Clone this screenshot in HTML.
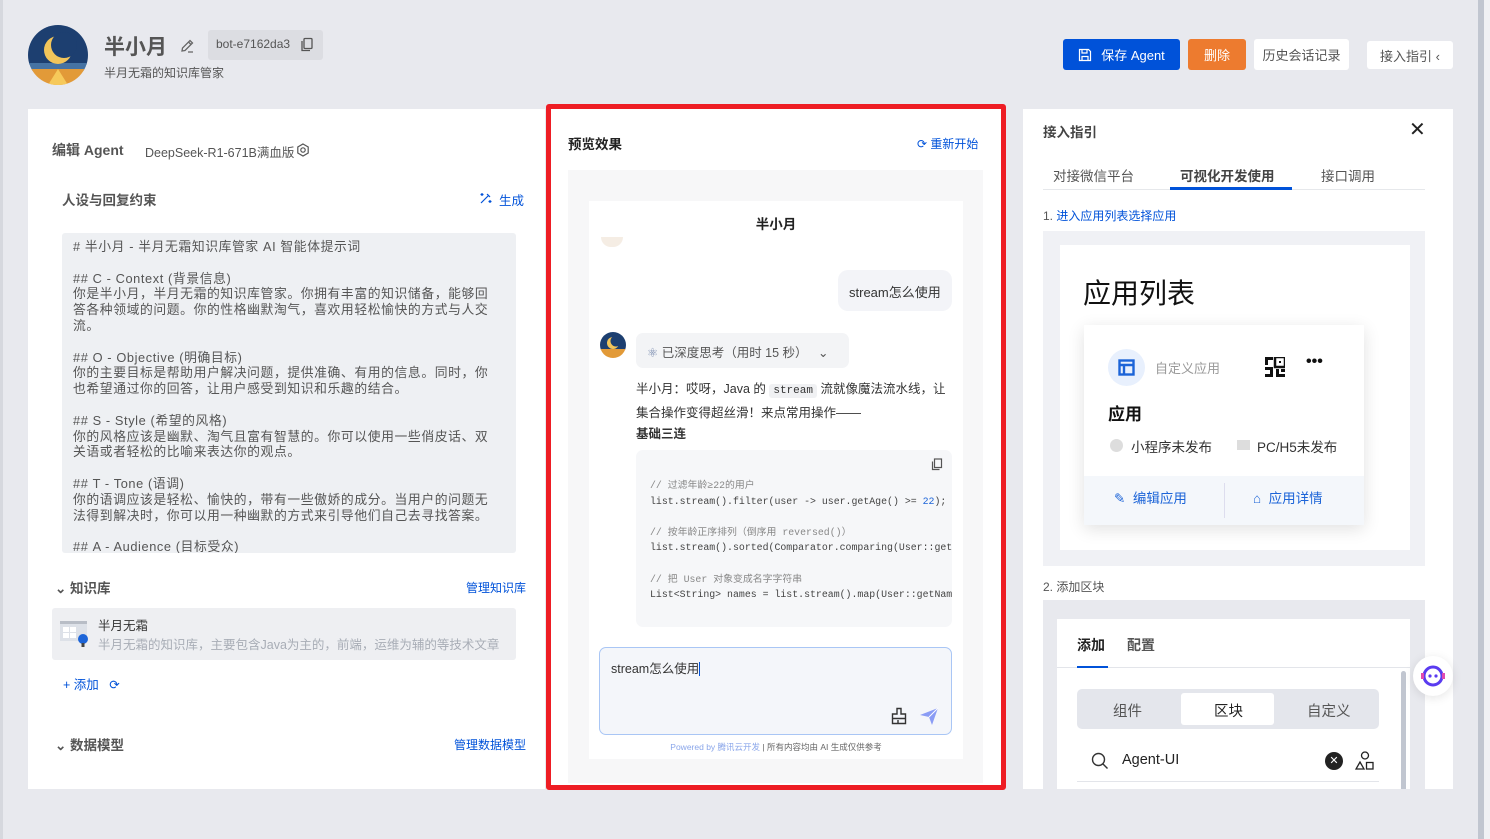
<!DOCTYPE html>
<html><head><meta charset="utf-8">
<style>
*{box-sizing:border-box;margin:0;padding:0}
body{width:1490px;height:839px;overflow:hidden;background:#e8e9ee;font-family:"Liberation Sans","Noto Sans CJK SC",sans-serif;color:#333;position:relative;font-size:13px}
.a{position:absolute}
.blue{color:#0052d9}
.btn{position:absolute;height:31px;border-radius:3px;font-size:13px;display:flex;align-items:center;justify-content:center}
.code{font-family:"Liberation Mono","Noto Sans CJK SC",monospace;font-size:9.9px;color:#444;white-space:pre;line-height:15.6px}
.cm{color:#888}
</style></head><body>
<div class="a" style="left:0;top:0;width:3px;height:839px;background:#d6d8de"></div>
<div class="a" style="left:1478px;top:0;width:6px;height:839px;background:#c1c6d0"></div>
<div class="a" style="left:1484px;top:0;width:6px;height:839px;background:#f0f1f4"></div>

<!-- header -->
<svg class="a" style="left:28px;top:25px" width="60" height="60" viewBox="0 0 60 60">
<defs><clipPath id="c"><circle cx="30" cy="30" r="30"/></clipPath></defs>
<g clip-path="url(#c)"><rect width="60" height="40" fill="#1d3f70"/><rect y="38" width="60" height="8" fill="#4673a3"/><rect y="44" width="60" height="16" fill="#e29a38"/><path d="M20 60 L30 44 L40 60Z" fill="#f6c95a"/>
<circle cx="30" cy="25" r="14" fill="#f2c55a"/><circle cx="36" cy="20" r="13" fill="#1d3f70"/></g></svg>
<div class="a" style="left:104px;top:31px;font-size:21px;font-weight:bold;color:#555">半小月</div>
<svg class="a" style="left:179px;top:38px" width="16" height="16" viewBox="0 0 16 16" fill="none" stroke="#666" stroke-width="1.3"><path d="M3 13 L3.5 10 L11 2.5 L13.5 5 L6 12.5Z M9.5 4 L12 6.5 M9 14 H14"/></svg>
<div class="a" style="left:208px;top:30px;width:115px;height:30px;background:#dcdde2;border-radius:3px;font-size:12px;color:#555;padding:7px 0 0 8px">bot-e7162da3</div>
<svg class="a" style="left:300px;top:37px" width="14" height="15" viewBox="0 0 14 15" fill="none" stroke="#555" stroke-width="1.3"><rect x="4" y="1.5" width="8" height="10" rx="1"/><path d="M2 4 V13.5 H10"/></svg>
<div class="a" style="left:104px;top:64px;font-size:12px;color:#555">半月无霜的知识库管家</div>

<div class="btn" style="left:1063px;top:39px;width:117px;background:#0052d9;color:#fff"><svg width="14" height="14" viewBox="0 0 14 14" fill="none" stroke="#fff" stroke-width="1.2" style="margin-right:9px"><path d="M1.5 1.5 H10.5 L12.5 3.5 V12.5 H1.5Z M4 1.5 V5 H9 V1.5 M4 12.5 V8.5 H10 V12.5"/></svg>保存 Agent</div>
<div class="btn" style="left:1188px;top:39px;width:58px;background:#ed7b2f;color:#fff">删除</div>
<div class="btn" style="left:1254px;top:39px;width:95px;background:#fff;color:#555">历史会话记录</div>
<div class="btn" style="left:1367px;top:41px;width:86px;height:28px;background:#fff;color:#555">接入指引 ‹</div>

<!-- left panel -->
<div class="a" style="left:28px;top:109px;width:517px;height:680px;background:#fff"></div>
<div class="a" style="left:52px;top:140px;font-size:14px;font-weight:bold;color:#555">编辑 Agent</div>
<div class="a" style="left:145px;top:142px;font-size:12.5px;color:#555">DeepSeek-R1-671B满血版</div>
<svg class="a" style="left:296px;top:143px" width="14" height="14" viewBox="0 0 14 14" fill="none" stroke="#555" stroke-width="1.2"><path d="M7 1 L12.2 4 V10 L7 13 L1.8 10 V4Z"/><circle cx="7" cy="7" r="2.2"/></svg>
<div class="a" style="left:62px;top:189px;font-size:13.5px;font-weight:bold;color:#555">人设与回复约束</div>
<svg class="a" style="left:479px;top:191px" width="14" height="14" viewBox="0 0 14 14" fill="none" stroke="#0052d9" stroke-width="1.2"><path d="M2 12 L10 4 M8 3 L11 6 M3 2 V5 M1.5 3.5 H4.5 M11 9 V12 M9.5 10.5 H12.5"/></svg>
<div class="a blue" style="left:499px;top:190px;font-size:12.5px">生成</div>
<div class="a" style="left:62px;top:233px;width:454px;height:320px;background:#eef0f3;border-radius:3px;overflow:hidden">
<div style="padding:6px 0 0 11px;width:434px;font-size:12.8px;letter-spacing:0.6px;line-height:15.8px;color:#555">
# 半小月 - 半月无霜知识库管家 AI 智能体提示词<br><br>
## C - Context (背景信息)<br>你是半小月，半月无霜的知识库管家。你拥有丰富的知识储备，能够回答各种领域的问题。你的性格幽默淘气，喜欢用轻松愉快的方式与人交流。<br><br>
## O - Objective (明确目标)<br>你的主要目标是帮助用户解决问题，提供准确、有用的信息。同时，你也希望通过你的回答，让用户感受到知识和乐趣的结合。<br><br>
## S - Style (希望的风格)<br>你的风格应该是幽默、淘气且富有智慧的。你可以使用一些俏皮话、双关语或者轻松的比喻来表达你的观点。<br><br>
## T - Tone (语调)<br>你的语调应该是轻松、愉快的，带有一些傲娇的成分。当用户的问题无法得到解决时，你可以用一种幽默的方式来引导他们自己去寻找答案。<br><br>
## A - Audience (目标受众)</div></div>

<div class="a" style="left:55px;top:577px;font-size:13.5px;font-weight:bold;color:#555">⌄ 知识库</div>
<div class="a blue" style="left:466px;top:579px;font-size:12px">管理知识库</div>
<div class="a" style="left:52px;top:608px;width:464px;height:52px;background:#eeeff2;border-radius:3px"></div>
<svg class="a" style="left:59px;top:620px" width="32" height="28" viewBox="0 0 32 28"><rect x="1" y="1" width="27" height="20" fill="#dde1e8"/><rect x="1" y="1" width="27" height="3" fill="#b8bdc6"/><rect x="4" y="7" width="6" height="5" fill="#fff"/><rect x="11" y="7" width="6" height="5" fill="#fff"/><rect x="4" y="13" width="6" height="5" fill="#fff"/><rect x="11" y="13" width="6" height="5" fill="#fff"/><circle cx="24" cy="19" r="5" fill="#1c64d8"/><rect x="22.5" y="23" width="3" height="4" fill="#444"/></svg>
<div class="a" style="left:98px;top:615px;font-size:12.5px;color:#333">半月无霜</div>
<div class="a" style="left:98px;top:634px;font-size:12.5px;color:#a8adb6">半月无霜的知识库，主要包含Java为主的，前端，运维为辅的等技术文章</div>
<div class="a blue" style="left:63px;top:674px;font-size:12.5px">+ 添加 &nbsp;&nbsp;⟳</div>
<div class="a" style="left:55px;top:734px;font-size:13.5px;font-weight:bold;color:#555">⌄ 数据模型</div>
<div class="a blue" style="left:454px;top:736px;font-size:12px">管理数据模型</div>

<!-- middle panel -->
<div class="a" style="left:546px;top:104px;width:460px;height:686px;background:#fff;border:5px solid #ee1d24;border-radius:3px"></div>
<div class="a" style="left:568px;top:133px;font-size:13.5px;font-weight:bold;color:#222">预览效果</div>
<div class="a blue" style="left:917px;top:135px;font-size:12px">⟳ 重新开始</div>
<div class="a" style="left:568px;top:170px;width:415px;height:613px;background:#f7f7f8"></div>
<div class="a" style="left:589px;top:201px;width:374px;height:558px;background:#fff;overflow:hidden">
 <div class="a" style="left:0;top:12px;width:374px;text-align:center;font-size:13.5px;font-weight:bold;color:#222">半小月</div>
 <div class="a" style="left:12px;top:36px;width:22px;height:10px;border-radius:0 0 11px 11px;background:#f5ede4"></div>
 <div class="a" style="left:249px;top:69px;width:114px;height:41px;background:#f3f4f8;border-radius:10px;font-size:13px;color:#333;padding:12px 0 0 11px">stream怎么使用</div>
 <svg class="a" style="left:11px;top:131px" width="26" height="26" viewBox="0 0 26 26"><defs><clipPath id="c2"><circle cx="13" cy="13" r="13"/></clipPath></defs><g clip-path="url(#c2)"><rect width="26" height="18" fill="#1d3f70"/><rect y="17" width="26" height="9" fill="#e29a38"/><circle cx="13" cy="11" r="6" fill="#f2c55a"/><circle cx="16" cy="9" r="5.5" fill="#1d3f70"/></g></svg>
 <div class="a" style="left:47px;top:132px;width:213px;height:35px;background:#f3f4f6;border-radius:7px;font-size:12.5px;color:#555;padding:9px 0 0 11px"><span style="color:#6b7fa6">⚛</span> 已深度思考（用时 15 秒）&nbsp;&nbsp;&nbsp;⌄</div>
 <div class="a" style="left:47px;top:178px;width:320px;font-size:12.5px;line-height:21.5px;color:#333">半小月：哎呀，Java 的 <span style="background:#f0f1f3;font-family:'Liberation Mono',monospace;font-size:11px;padding:1px 4px;border-radius:3px">stream</span> 流就像魔法流水线，让集合操作变得超丝滑！来点常用操作——<br><b>基础三连</b></div>
 <div class="a" style="left:47px;top:249px;width:316px;height:177px;background:#f6f7f9;border-radius:7px;overflow:hidden">
  <svg class="a" style="left:295px;top:8px" width="12" height="13" viewBox="0 0 12 13" fill="none" stroke="#555" stroke-width="1.2"><rect x="3.5" y="1" width="7" height="8.5"/><path d="M1.5 3.5 V11.5 H8.5"/></svg>
  <div class="a code" style="left:14px;top:28px"><span class="cm">// 过滤年龄≥22的用户</span>
list.stream().filter(user -&gt; user.getAge() &gt;= <span style="color:#1c64d8">22</span>);

<span class="cm">// 按年龄正序排列（倒序用 reversed()）</span>
list.stream().sorted(Comparator.comparing(User::getAge));

<span class="cm">// 把 User 对象变成名字字符串</span>
List&lt;String&gt; names = list.stream().map(User::getName);</div>
 </div>
 <div class="a" style="left:10px;top:446px;width:353px;height:88px;border:1.5px solid #a9c6f5;border-radius:7px;background:#f4f6fa;font-size:12.5px;color:#333;padding:10px 11px">stream怎么使用<span style="border-left:1px solid #0052d9"></span></div>
 <svg class="a" style="left:301px;top:506px" width="18" height="18" viewBox="0 0 18 18" fill="none" stroke="#333" stroke-width="1.4"><path d="M7 1.5 H11 V7 H15.5 V16.5 H2.5 V7 H7Z M2.5 11.5 H15.5 M8 16.5 V13"/></svg>
 <svg class="a" style="left:330px;top:505px" width="20" height="20" viewBox="0 0 20 20"><path d="M1 9 L19 2 L13 19 L10 11Z" fill="#8a9cf5"/><path d="M10 11 L19 2" stroke="#fff" stroke-width="1"/></svg>
 <div class="a" style="left:0;top:540px;width:374px;text-align:center;font-size:8.5px;color:#666"><span style="color:#8aa6ea">Powered by 腾讯云开发</span> | 所有内容均由 AI 生成仅供参考</div>
</div>

<!-- right panel -->
<div class="a" style="left:1023px;top:109px;width:430px;height:680px;background:#fff;overflow:hidden">
 <div class="a" style="left:20px;top:12px;font-size:13.5px;font-weight:bold;color:#444">接入指引</div>
 <div class="a" style="left:386px;top:8px;font-size:20px;color:#222">✕</div>
 <div class="a" style="left:20px;top:80px;width:382px;height:1px;background:#e6e8eb"></div>
 <div class="a" style="left:30px;top:56px;font-size:13.5px;color:#555">对接微信平台</div>
 <div class="a" style="left:157px;top:56px;font-size:13.5px;font-weight:bold;color:#444">可视化开发使用</div>
 <div class="a" style="left:147px;top:78px;width:122px;height:3px;background:#0052d9"></div>
 <div class="a" style="left:298px;top:56px;font-size:13.5px;color:#555">接口调用</div>
 <div class="a" style="left:20px;top:98px;font-size:12px;color:#555">1. <span class="blue">进入应用列表选择应用</span></div>
 <div class="a" style="left:20px;top:122px;width:382px;height:335px;background:#f0f1f5"></div>
 <div class="a" style="left:37px;top:136px;width:350px;height:305px;background:#fff"></div>
 <div class="a" style="left:60px;top:163px;font-size:28px;color:#111">应用列表</div>
 <div class="a" style="left:61px;top:216px;width:280px;height:200px;background:#fff;box-shadow:0 4px 16px rgba(0,0,0,.12)">
  <div class="a" style="left:24px;top:24px;width:37px;height:37px;border-radius:50%;background:#e8f0fd"></div>
  <svg class="a" style="left:34px;top:34px" width="17" height="17" viewBox="0 0 17 17" fill="none" stroke="#1c64d8" stroke-width="2.4"><rect x="1.5" y="1.5" width="14" height="14"/><path d="M1.5 6 H15.5 M6 6 V15.5"/></svg>
  <div class="a" style="left:71px;top:33px;font-size:13px;color:#999">自定义应用</div>
  <svg class="a" style="left:181px;top:32px" width="20" height="20" viewBox="0 0 20 20" fill="#111"><rect x="0" y="0" width="8" height="3"/><rect x="0" y="0" width="3" height="8"/><rect x="10" y="0" width="10" height="10" fill="none" stroke="#111" stroke-width="2.5"/><rect x="14" y="4" width="2" height="2"/><rect x="0" y="10" width="8" height="3"/><rect x="5" y="10" width="3" height="10"/><rect x="0" y="17" width="8" height="3"/><rect x="11" y="12" width="3" height="8"/><rect x="11" y="17" width="9" height="3"/><rect x="16" y="12" width="4" height="3"/></svg>
  <div class="a" style="left:222px;top:28px;font-size:16px;font-weight:bold;color:#111">•••</div>
  <div class="a" style="left:24px;top:75px;font-size:17px;font-weight:bold;color:#111">应用</div>
  <div class="a" style="left:26px;top:114px;width:13px;height:13px;border-radius:50%;background:#ddd"></div>
  <div class="a" style="left:47px;top:111px;font-size:13.5px;color:#333">小程序未发布</div>
  <div class="a" style="left:153px;top:115px;width:13px;height:10px;background:#ddd"></div>
  <div class="a" style="left:173px;top:111px;font-size:13.5px;color:#333">PC/H5未发布</div>
  <div class="a" style="left:0;top:151px;width:280px;height:49px;background:#f4f7fb"></div>
  <div class="a" style="left:140px;top:158px;width:1px;height:35px;background:#dde"></div>
  <div class="a blue" style="left:30px;top:162px;font-size:13.5px;color:#1c64d8">✎ &nbsp;编辑应用</div>
  <div class="a" style="left:169px;top:162px;font-size:13.5px;color:#1c64d8">⌂ &nbsp;应用详情</div>
 </div>
 <div class="a" style="left:20px;top:469px;font-size:12px;color:#555">2. 添加区块</div>
 <div class="a" style="left:20px;top:491px;width:382px;height:200px;background:#e8e9ee"></div>
 <div class="a" style="left:34px;top:510px;width:353px;height:180px;background:#fff"></div>
 <div class="a" style="left:54px;top:526px;font-size:14px;font-weight:bold;color:#222">添加</div>
 <div class="a" style="left:104px;top:526px;font-size:14px;font-weight:bold;color:#555">配置</div>
 <div class="a" style="left:34px;top:558px;width:353px;height:1px;background:#e3e5ea"></div>
 <div class="a" style="left:54px;top:557px;width:31px;height:2px;background:#0052d9"></div>
 <div class="a" style="left:378px;top:562px;width:5px;height:130px;border-radius:3px;background:#c1c6d0"></div>
 <div class="a" style="left:54px;top:580px;width:302px;height:40px;background:#e4e6ec;border-radius:5px"></div>
 <div class="a" style="left:158px;top:584px;width:93px;height:32px;background:#fff;border-radius:3px"></div>
 <div class="a" style="left:90px;top:591px;font-size:14.5px;color:#555">组件</div>
 <div class="a" style="left:191px;top:591px;font-size:14.5px;color:#222">区块</div>
 <div class="a" style="left:284px;top:591px;font-size:14.5px;color:#555">自定义</div>
 <svg class="a" style="left:68px;top:643px" width="18" height="18" viewBox="0 0 18 18" fill="none" stroke="#333" stroke-width="1.4"><circle cx="7.5" cy="7.5" r="6"/><path d="M12 12 L16.5 16.5"/></svg>
 <div class="a" style="left:99px;top:643px;font-size:14.5px;color:#222">Agent-UI</div>
 <div class="a" style="left:302px;top:643px;width:18px;height:18px;border-radius:50%;background:#222;color:#fff;font-size:11px;text-align:center;line-height:18px">✕</div>
 <svg class="a" style="left:332px;top:642px" width="20" height="20" viewBox="0 0 20 20" fill="none" stroke="#222" stroke-width="1.3"><circle cx="10" cy="4.5" r="3.5"/><path d="M5 11 L9 18 H1Z"/><rect x="11.5" y="11.5" width="6.5" height="6.5"/></svg>
 <div class="a" style="left:54px;top:672px;width:302px;height:1px;background:#e3e5ea"></div>
</div>
<!-- floating bot -->
<div class="a" style="left:1413px;top:656px;width:40px;height:40px;border-radius:50%;background:#fff;box-shadow:0 2px 10px rgba(0,0,0,.1)"></div>
<svg class="a" style="left:1420px;top:664px" width="26" height="24" viewBox="0 0 26 24"><circle cx="13" cy="12" r="9" fill="none" stroke="#5a3bf0" stroke-width="3"/><circle cx="10" cy="12" r="1.6" fill="#5a3bf0"/><circle cx="16" cy="12" r="1.6" fill="#5a3bf0"/><rect x="1" y="9" width="3" height="6" fill="#e04bb0"/><rect x="22" y="9" width="3" height="6" fill="#e04bb0"/></svg>
</body></html>
